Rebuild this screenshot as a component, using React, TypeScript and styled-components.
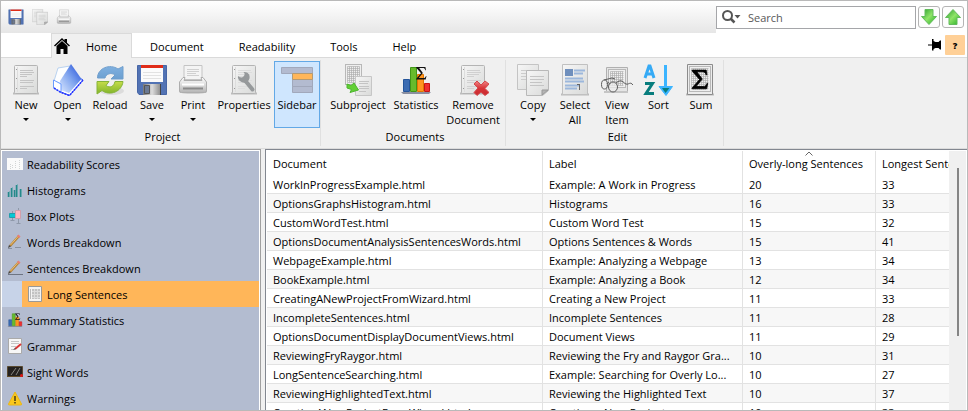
import React from "react";
import styled, { createGlobalStyle } from "styled-components";

const Global = createGlobalStyle`
  * { box-sizing: border-box; }
  body { margin: 0; }
  body, button, input, table { font-family: "Open Sans", "Noto Sans", sans-serif; font-size: 11px; line-height: 15px; color: #000; }
  button { border: 0; padding: 0; background: none; }
  svg { display: block; flex: none; }
`;

const Frame = styled.div`
  display: flex;
  flex-direction: column;
  height: 100vh;
  border: 1px solid #b9b9b9;
  background: #f0f0f0;
  overflow: hidden;
`;

/* ---------- top bar ---------- */

const TopBar = styled.header`
  display: flex;
  height: 32px;
  flex: none;
  background: #fff;
`;
const QuickTools = styled.div`
  flex: 1;
  display: flex;
  gap: 8px;
  align-items: center;
  padding-left: 7px;
  background: linear-gradient(#fff, #e6e6e6);
`;
const SearchArea = styled.div`
  display: flex;
  align-items: center;
  gap: 2px;
  padding-right: 3px;
`;
const SearchBox = styled.label`
  display: flex;
  align-items: center;
  gap: 7px;
  width: 200px;
  height: 23px;
  padding-left: 5px;
  border: 1px solid #a5a6a9;
`;
const SearchInput = styled.input`
  flex: 1;
  min-width: 0;
  border: 0;
  padding: 0;
  outline: 0;
  background: none;
  &::placeholder { color: #585858; opacity: 1; }
`;
const ArrowButton = styled.button`
  display: flex;
  align-items: center;
  justify-content: center;
  width: 22px;
  height: 22px;
  border: 1px solid #b4b4b4;
  border-radius: 3px;
  background: #fdfdfd;
`;

/* ---------- tabs ---------- */

const TabBar = styled.nav`
  display: flex;
  height: 25px;
  flex: none;
  padding-left: 50px;
  background: #fff;
  box-shadow: inset 0 -1px #dadada;
`;
const Tab = styled.button<{ $active?: boolean }>`
  display: flex;
  align-items: center;
  padding: 0 ${(p) => (p.$active ? 14 : 16)}px 0 ${(p) => (p.$active ? 2 : 17)}px;
  border: solid ${(p) => (p.$active ? "#dadada" : "transparent")};
  border-width: 1px 1px 0;
  background: ${(p) => (p.$active ? "#f0f0f0" : "transparent")};
  svg { margin-right: 16px; }
`;
const TabTools = styled.div`
  display: flex;
  align-items: center;
  gap: 4px;
  margin-left: auto;
  padding: 2px 2px 3px 0;
`;
const HelpButton = styled.button`
  width: 20px;
  height: 20px;
  border-radius: 1px;
  background: #ffd097;
  font-size: 9px;
  font-weight: 800;
`;

/* ---------- ribbon ---------- */

const Ribbon = styled.div`
  display: flex;
  flex: none;
  padding: 2px 0 2px;
  border-bottom: 1px solid #dcdcdc;
`;
const Group = styled.section<{ $lead: number }>`
  display: flex;
  flex-direction: column;
  padding-left: ${(p) => p.$lead}px;
  border-right: 1px solid #e0e0e0;
`;
const Tools = styled.div`
  display: flex;
  height: 67px;
  margin-top: 1px;
`;
const GroupName = styled.div`
  padding: 1px 0 2px;
  text-align: center;
`;
const ToolButton = styled.button<{ $width: number; $pressed?: boolean }>`
  display: flex;
  flex-direction: column;
  align-items: center;
  width: ${(p) => p.$width}px;
  padding-top: 2px;
  border: 1px solid ${(p) => (p.$pressed ? "#62a8e6" : "transparent")};
  background: ${(p) => (p.$pressed ? "#cfe6fe" : "transparent")};
`;
const ToolLabel = styled.span`
  display: block;
  margin-top: 1px;
  white-space: pre;
`;
const Caret = styled.span`
  margin-top: 6px;
  border: 3px solid transparent;
  border-top-color: #000;
  border-bottom: 0;
`;

/* ---------- body ---------- */

const Body = styled.div`
  flex: 1;
  min-height: 0;
  display: flex;
  gap: 4px;
`;
const Sidebar = styled.aside`
  flex: none;
  width: 260px;
  border: solid #a0a0a0;
  border-width: 1px 1px 0 0;
  padding: 1px 1px 0;
  background: #fff;
  overflow: hidden;
`;
const SideRow = styled.div<{ $nested?: boolean }>`
  padding-left: ${(p) => (p.$nested ? 20 : 0)}px;
  background: ${(p) => (p.$nested ? "#c7d3e8" : "#b3bcd0")};
`;
const SideItem = styled.button<{ $active?: boolean }>`
  display: flex;
  align-items: center;
  gap: 4px;
  width: 100%;
  height: 26px;
  padding-left: 5px;
  background: ${(p) => (p.$active ? "#ffb659" : "transparent")};
`;
const ListPane = styled.main`
  flex: 1;
  min-width: 0;
  display: flex;
  border: solid #828790;
  border-width: 1px 0 0 1px;
  padding: 1px 1px 0;
  background: #fff;
`;
const TableClip = styled.div`
  flex: 1;
  min-width: 0;
  overflow: hidden;
`;
const Table = styled.table`
  table-layout: fixed;
  width: 742px;
  border-collapse: separate;
  border-spacing: 0;
`;
const Head = styled.th<{ $width: number }>`
  position: relative;
  width: ${(p) => p.$width}px;
  height: 24px;
  padding: 0 0 0 6px;
  border-right: 1px solid #e2e2e2;
  font-weight: 400;
  text-align: left;
  white-space: nowrap;
  svg { position: absolute; top: 0; left: calc(50% - 4px); }
`;
const Row = styled.tr`
  &:nth-child(even) { background: #f7f7f7; }
`;
const Cell = styled.td`
  height: 19px;
  padding: 0 0 0 6px;
  border: solid #e2e2e2;
  border-width: 0 1px 1px 0;
  white-space: nowrap;
`;
const ScrollTrack = styled.div`
  width: 17px;
  flex: none;
  padding: 17px 0 0 8px;
  background: #f0f0f0;
`;
const ScrollThumb = styled.div`
  width: 2px;
  height: 168px;
  background: #858585;
`;

/* ---------- drawings ---------- */

const Svg = ({ s = 32, vb = 32, children }: { s?: number; vb?: number; children: React.ReactNode }) => (
  <svg width={s} height={s} viewBox={`0 0 ${vb} ${vb}`} aria-hidden="true">{children}</svg>
);

const HiddenSvg = styled.svg`
  position: absolute;
`;

const Defs = () => (
  <HiddenSvg width="0" height="0" aria-hidden="true">
    <defs>
      <linearGradient id="paper" x2="1" y2="1"><stop stopColor="#f6f6f6" /><stop offset="1" stopColor="#d9dad9" /></linearGradient>
      <linearGradient id="blue" x2="0" y2="1"><stop stopColor="#7fb0e0" /><stop offset="1" stopColor="#6c9fd0" /></linearGradient>
      <linearGradient id="lime" x2="0" y2="1"><stop stopColor="#c6dd4a" /><stop offset="1" stopColor="#7fb32a" /></linearGradient>
      <linearGradient id="folder" x1="0" y1="1" x2="1" y2="0"><stop stopColor="#dce8ff" /><stop offset=".5" stopColor="#7fa4ee" /><stop offset="1" stopColor="#1d49d8" /></linearGradient>
      <linearGradient id="metal" x2="0" y2="1"><stop stopColor="#fff" /><stop offset="1" stopColor="#b5b5b5" /></linearGradient>
      <linearGradient id="shutter"><stop stopColor="#777" /><stop offset=".5" stopColor="#ddd" /><stop offset="1" stopColor="#888" /></linearGradient>
      <linearGradient id="green" x2="1" y2="1"><stop stopColor="#239b2a" /><stop offset=".5" stopColor="#8fe468" /><stop offset="1" stopColor="#20ad22" /></linearGradient>
      <linearGradient id="red" x2="0" y2="1"><stop stopColor="#f08484" /><stop offset=".5" stopColor="#d83438" /><stop offset="1" stopColor="#c82b2f" /></linearGradient>
    </defs>
  </HiddenSvg>
);

const Page = () => (
  <>
    <path d="M3 29.500h26" stroke="#bcbcbc" strokeWidth="2" />
    <rect x="4.500" y="1.500" width="23" height="28" rx="1" fill="url(#paper)" stroke="#b4b4b4" />
    <path d="M7.500 3v25" stroke="#ddd" />
    <path d="M6 5.500h1M6 14.500h1M6 24.500h1" stroke="#999" />
  </>
);
const lines = "M10 6.500h13M10 8.500h14M10 10.500h12M10 12.500h7M10 16.500h14M10 18.500h13M10 22.500h14M10 24.500h7";

const NewIcon = () => <Svg><Page /><path d={lines} stroke="#c4c4c4" /></Svg>;

const OpenIcon = () => (
  <Svg>
    <path d="M2 17 6 4l12-2-8 18z" fill="#fdfeff" stroke="#b9d2f0" />
    <path d="m26 13 5 3-13.500 15.500L9 28" fill="#fff" stroke="#2b50ff" />
    <path d="m8 17 11-17 10.500 15L17 29l-8-3z" fill="url(#folder)" />
    <path d="m1.500 16 7.500 4v8.500L1.500 24z" fill="#fff" stroke="#6b9bff" />
    <path d="m2 24 7 4.500 8.500 3L31 16" fill="none" stroke="#2330ff" strokeWidth="1.500" strokeDasharray="2 1" />
  </Svg>
);

const ReloadIcon = () => (
  <Svg>
    <ellipse cx="18" cy="27" rx="12" ry="4" fill="#dcdcdc" />
    <path d="M3.500 14C3.500 4 16-.5 24 5l5-2.500V15H17l4-4c-4-3-9-1-10 3z" fill="url(#blue)" stroke="#6f9ecd" />
    <path d="M29 17.500c-1 10-13 15-21 9l-5 3.500V17.500h12l-3 4c4 3 8 1 9-4z" fill="url(#lime)" stroke="#86b438" />
  </Svg>
);

const Disk = () => (
  <>
    <path d="M1.500 1.500h29v29H3l-1.500-2z" fill="#5273b4" stroke="#4766a6" />
    <path d="M5 1h22v17H5z" fill="#fbfbfb" />
    <path d="M5 1h22v3H5z" fill="#e02c18" />
    <path d="M7 8.500h18M7 11.500h18M7 14.500h18" stroke="#e2e2e2" />
    <path d="M7 20h18v11H7z" fill="url(#shutter)" />
    <path d="M8.500 21.500h5v8h-5z" fill="#6b7a94" stroke="#555" />
    <path d="M24.500 20v11" stroke="#444" />
  </>
);

const Printer = () => (
  <>
    <ellipse cx="16" cy="28" rx="14" ry="2" fill="#d0d0d0" />
    <path d="M7 1.500h18v14H7z" fill="#f4f4f4" stroke="#c4c4c4" />
    <path d="M10 5.500h12M10 7.500h12M10 9.500h9M10 11.500h12" stroke="#d0d0d0" />
    <path d="M6 13.500 2.500 18v9q0 1.500 2 1.500h23q2 0 2-1.500v-9L26 13.500h-2l1 3H7l1-3z" fill="url(#metal)" stroke="#adadad" />
    <path d="M5 20.500h22" stroke="#fff" strokeWidth="2" />
    <path d="M6 24.500h20" stroke="#8a8a8a" strokeWidth="2" />
  </>
);

const PropertiesIcon = () => (
  <Svg>
    <Page /><path d={lines} stroke="#dcdcdc" />
    <path d="m24.500 25.500-7-8.500" stroke="#96999b" strokeWidth="4" strokeLinecap="round" />
    <path d="M10 12c1.500 1.500 4 2 5.500.5S17 9 15.500 8c4-.5 7 2.500 6 6.500s-5 5-8 3.500S9.500 14 10 12z" fill="#96999b" />
  </Svg>
);

const SidebarIcon = () => (
  <Svg>
    <path d="M.5 3.500h31v6H.500zM11.500 15.500h20v7h-20zM11.500 22.500h20v6h-20z" fill="#b3bbd0" stroke="#a1a8bb" />
    <path d="M11.500 9.500h20v6h-20z" fill="#ffb659" stroke="#b49a72" />
  </Svg>
);

const Grid = ({ x, y, w, h }: { x: number; y: number; w: number; h: number }) => (
  <>
    <rect x={x} y={y} width={w} height={h} fill="#efefef" stroke="#b8b8b8" />
    {Array.from({ length: Math.floor((w - 2) / 2) }, (_, i) => <path key={i} d={`M${x + 2 + i * 2} ${y + 2}v${h - 4}`} stroke="#c2c2c2" />)}
    {Array.from({ length: Math.floor((h - 2) / 2) }, (_, i) => <path key={i} d={`M${x + 2} ${y + 2 + i * 2}h${w - 4}`} stroke="#a8a8a8" strokeOpacity=".6" />)}
  </>
);

const SubprojectIcon = () => (
  <Svg>
    <Grid x={3.5} y={0.5} w={16} h={20} />
    <path d="M13.500 12.500h16v19h-16z" fill="url(#paper)" stroke="#c6c6c6" />
    <path d="M17 17.500h10M17 19.500h9M17 22.500h10M17 24.500h10M17 27.500h7" stroke="#c4c4c4" />
    <path d="m5 20 4 1.500 3-2.500 4.500 7-8.500 2.500 1.500-3L5 24z" fill="#62cf35" stroke="#4db62e" />
  </Svg>
);

const sigma = "M4 4h18l1 6h-1.200c-.8-2.800-2-4-5-4H10l7 9.500L9 25h9c3 0 4.200-1.500 5-4h1l-1.500 7H4v-1l9.500-11L4 5z";

const Chart = () => (
  <>
    <path d="M1 28h30l-2 2H3z" fill="#8b8fa0" />
    <path d="M3.500 15.500h6v12h-6z" fill="#3c6cb2" stroke="#24559a" />
    <path d="M10.500 3.500h6v24h-6z" fill="#67bb2c" stroke="#409617" />
    <path d="M17.500 10.500h6v17h-6z" fill="#ff951f" stroke="#e17600" />
    <path d="M24.500 19.500h5v8h-5z" fill="#ef3030" stroke="#c71414" />
    <path d={sigma} transform="translate(14 1) scale(.52)" fill="#111" />
  </>
);

const RemoveIcon = () => (
  <Svg>
    <Page /><path d={lines} stroke="#d0d0d0" />
    <path d="m17 20 3-3 4 4 4-4 4 3-4 4.500 4 4-4 3-4-3.500-4 3.500-3-3 4-4.500z" fill="url(#red)" stroke="#d5484c" />
  </Svg>
);

const CopyPages = () => (
  <>
    <path d="M.5.5h21v25H.500z" fill="url(#paper)" stroke="#c4c4c4" />
    <path d="M4 6.500h12M4 9.500h5M4 12.500h5M4 15.500h5" stroke="#ccc" />
    <path d="M9.500 6.500h22v20l-6 5h-16z" fill="url(#paper)" stroke="#b8b8b8" />
    <path d="M13 12.500h14M13 15.500h14M13 18.500h12M13 21.500h14" stroke="#c4c4c4" />
    <path d="m31 26-6 5v-5z" fill="#b4b4b4" stroke="#989898" />
  </>
);

const SelectIcon = () => (
  <Svg>
    <path d="M2 30.500h28" stroke="#bbb" strokeWidth="2" />
    <path d="M3.500.5h25v30h-25z" fill="url(#paper)" stroke="#c0c0c0" />
    <path d="M6 5h8v7H6z" fill="#6f8fbd" />
    <path d="M15 6.500h11M15 9.500h9M6 14.500h18M6 17.500h19M6 21.500h14M6 24.500h12" stroke="#9cb7dc" strokeWidth="2" />
    <path d="M18 20.500h3M20.500 20v6" stroke="#666" />
  </Svg>
);

const ViewIcon = () => (
  <Svg>
    <path d="M5.500 3.500h21v24h-21z" fill="#e5e5e5" stroke="#b0b0b0" />
    <Grid x={7.5} y={5.5} w={17} h={18} />
    <path d="M3 28h24" stroke="#c5c5c5" strokeWidth="2" />
    <g fill="#eee" fillOpacity=".7" stroke="#5d5d5d">
      <ellipse cx="3.500" cy="20.500" rx="3" ry="4.500" /><ellipse cx="12" cy="23" rx="4.500" ry="5" />
      <path d="M6 20c1-2 2-2 3 0M3 16l8-2 3 1M15 19c6-5 7 0 10 1s4-3 7 1" fill="none" />
    </g>
  </Svg>
);

const SortIcon = () => (
  <Svg>
    <path d="m2 14 4-12h1l4 12M4 10h6" fill="none" stroke="#35aaf5" strokeWidth="3" />
    <path d="M2 19.500h7.500L3 29.500h8" fill="none" stroke="#087d7d" strokeWidth="3" />
    <path d="M22.500 1v22" stroke="#3bb4ff" strokeWidth="3" />
    <path d="M16 22.500h13.500l-6.500 9z" fill="#3bb4ff" stroke="#3bb4ff" />
    <path d="M19 24h7.500l-4 5z" fill="#087d7d" />
  </Svg>
);

const SumIcon = () => (
  <Svg>
    <path d="M1 30.500h28" stroke="#bbb" strokeWidth="2" />
    <path d="M2.500.5h25v30h-25z" fill="#ececec" stroke="#8c8c8c" />
    <Grid x={4.5} y={2.5} w={21} h={25} />
    <path d={sigma} transform="translate(4 3) scale(.78)" fill="#000" stroke="#000" />
  </Svg>
);

const HomeIcon = () => (
  <Svg s={16} vb={16}>
    <path d="M8 0 0 7.500l1 1L8 2l7 6.500 1-1-3-2.800V1h-2.500v1.400zM8 3 2.500 8V16h4v-5h3v5h4V8z" />
  </Svg>
);

const SearchIcon = () => (
  <svg width="19" height="14" viewBox="0 0 19 14" aria-hidden="true">
    <circle cx="5.500" cy="5.500" r="4.500" fill="none" stroke="#555" strokeWidth="2" />
    <path d="m8.500 8.500 4 4" stroke="#555" strokeWidth="2.500" />
    <path d="M12.500 5h6l-3 3.500z" fill="#555" />
  </svg>
);

const PinIcon = () => (
  <svg width="13" height="12" viewBox="0 0 13 12" aria-hidden="true">
    <path d="M0 5.500h4V0h1.500v2l2 1h3l1.500-1.500h1v9h-1L10.500 9h-3l-2 1v1.500H4V6.500H0z" />
  </svg>
);

const ArrowIcon = ({ up }: { up?: boolean }) => (
  <Svg s={18} vb={18}>
    <path d={up ? "M9 1.500 1.500 9.500H5v7h8v-7h3.500z" : "M9 16.500 1.500 8.500H5v-7h8v7h3.500z"} fill="url(#green)" stroke="#62bb5c" />
  </Svg>
);

const Pencil = () => (
  <>
    <path d="M3 12 12 2" stroke="#b5843a" strokeWidth="2.500" />
    <path d="m3.500 11 8-9" stroke="#edc070" />
    <path d="m11 3 1.500-1.500" stroke="#e88075" strokeWidth="3" />
    <path d="m1 14 1-3 2 1.500z" fill="#4c4944" />
  </>
);

const sideIcons: Record<string, React.ReactNode> = {
  scores: <><path d="M0 2h16v12H0z" fill="#fafafa" /><path d="M3.500 8v5M5.500 9v3M8.500 5v8M12.500 4v9" stroke="#d2d5d5" strokeDasharray="1 1" /></>,
  histogram: <><path d="M2.500 15V9M5.500 15V5M10.500 15V2M14.500 15V7" stroke="#7fb3bb" /><path d="M1.500 15v-5M4.500 15V6M7.500 15V8M9.500 15V3M13.500 15V7" stroke="#25898b" strokeWidth="1.500" /></>,
  box: <>
    <path d="M5.500 3v10M11.500 0v16M3.500 12.500h4M9.500 15.500h4" stroke="#8f99aa" />
    <path d="M2.500 5.500h6v4h-6z" fill="#08c8d4" stroke="#259dab" /><path d="M8.500 2.500h5v8h-5z" fill="#ffb6c1" stroke="#d19fab" />
  </>,
  words: <><path d="M1 14.500h4M8 13.500h6" stroke="#88909f" /><Pencil /></>,
  sentences: <><path d="M1 14.500h15" stroke="#6d7482" /><Pencil /></>,
  list: <><path d="M1.500.5h13v15h-13z" fill="#f4f4f4" stroke="#999" /><path d="M5 3h8v10H5z" fill="#c2c2c2" /><path d="M3.500 3v10" stroke="#bbb" /><path d="M7.500 3v10M10.500 3v10M5 5.500h8M5 8.500h8M5 11.500h8" stroke="#ddd" /></>,
  stats: <g transform="scale(.5)"><Chart /></g>,
  grammar: <><path d="M1.500.5h13v15h-13z" fill="#f7f7f7" stroke="#aaa" /><path d="M4 3.500h8M4 5.500h8M4 8.500h5M4 11.500h4" stroke="#c5c5c5" /><path d="m8 11 6-5" stroke="#d93636" strokeWidth="2" /><path d="m6 12 2-2 1 1z" fill="#444" /></>,
  sight: <><path d="M.5 2.500h15v10H.500z" fill="#24211f" stroke="#594a31" /><path d="m4 11 5-7M9 11l4-7" stroke="#85847f" /><path d="M0 12.500h16" stroke="#604a27" /><circle cx="14.500" cy="11.500" r="1.500" fill="#e21515" /></>,
  warning: <><path d="m8 2 6.500 12q.5 1-1 1h-11q-1.500 0-1-1z" fill="#fac81c" stroke="#eab616" strokeLinejoin="round" /><path d="M8 6v5M8 12v1.500" stroke="#493b10" strokeWidth="1.500" /></>,
};

/* ---------- data ---------- */

type Tool = { label: string; width: number; icon: React.ReactNode; menu?: boolean; pressed?: boolean };
const groups: { name: string; lead: number; tools: Tool[] }[] = [
  { name: "Project", lead: 4, tools: [
    { label: "New", width: 42, icon: <NewIcon />, menu: true },
    { label: "Open", width: 41, icon: <OpenIcon />, menu: true },
    { label: "Reload", width: 44, icon: <ReloadIcon /> },
    { label: "Save", width: 40, icon: <Svg><Disk /></Svg>, menu: true },
    { label: "Print", width: 42, icon: <Svg><Printer /></Svg>, menu: true },
    { label: "Properties", width: 60, icon: <PropertiesIcon /> },
    { label: "Sidebar", width: 46, icon: <SidebarIcon />, pressed: true },
  ] },
  { name: "Documents", lead: 4, tools: [
    { label: "Subproject", width: 66, icon: <SubprojectIcon /> },
    { label: "Statistics", width: 50, icon: <Svg><Chart /></Svg> },
    { label: "Remove\nDocument", width: 64, icon: <RemoveIcon /> },
  ] },
  { name: "Edit", lead: 6, tools: [
    { label: "Copy", width: 42, icon: <Svg><CopyPages /></Svg>, menu: true },
    { label: "Select\nAll", width: 42, icon: <SelectIcon /> },
    { label: "View\nItem", width: 42, icon: <ViewIcon /> },
    { label: "Sort", width: 41, icon: <SortIcon /> },
    { label: "Sum", width: 44, icon: <SumIcon /> },
  ] },
];

const sideItems = [
  ["scores", "Readability Scores"],
  ["histogram", "Histograms"],
  ["box", "Box Plots"],
  ["words", "Words Breakdown"],
  ["sentences", "Sentences Breakdown"],
  ["list", "Long Sentences"],
  ["stats", "Summary Statistics"],
  ["grammar", "Grammar"],
  ["sight", "Sight Words"],
  ["warning", "Warnings"],
];

const rows: [string, string, number, number][] = [
  ["WorkInProgressExample.html", "Example: A Work in Progress", 20, 33],
  ["OptionsGraphsHistogram.html", "Histograms", 16, 33],
  ["CustomWordTest.html", "Custom Word Test", 15, 32],
  ["OptionsDocumentAnalysisSentencesWords.html", "Options Sentences & Words", 15, 41],
  ["WebpageExample.html", "Example: Analyzing a Webpage", 13, 34],
  ["BookExample.html", "Example: Analyzing a Book", 12, 34],
  ["CreatingANewProjectFromWizard.html", "Creating a New Project", 11, 33],
  ["IncompleteSentences.html", "Incomplete Sentences", 11, 28],
  ["OptionsDocumentDisplayDocumentViews.html", "Document Views", 11, 29],
  ["ReviewingFryRaygor.html", "Reviewing the Fry and Raygor Gra...", 10, 31],
  ["LongSentenceSearching.html", "Example: Searching for Overly Lo...", 10, 27],
  ["ReviewingHighlightedText.html", "Reviewing the Highlighted Text", 10, 37],
  ["CreatingANewProjectFromWizard.html", "Creating a New Project", 10, 33],
];

export default function App() {
  return (
    <Frame>
      <Global />
      <Defs />
      <TopBar>
        <QuickTools>
          <button aria-label="Save"><Svg s={16}><Disk /></Svg></button>
          <button aria-label="Copy"><Svg s={16}><CopyPages /></Svg></button>
          <button aria-label="Print"><Svg s={16}><Printer /></Svg></button>
        </QuickTools>
        <SearchArea>
          <SearchBox>
            <SearchIcon />
            <SearchInput placeholder="Search" aria-label="Search" />
          </SearchBox>
          <ArrowButton aria-label="Find next"><ArrowIcon /></ArrowButton>
          <ArrowButton aria-label="Find previous"><ArrowIcon up /></ArrowButton>
        </SearchArea>
      </TopBar>
      <TabBar>
        <Tab $active><HomeIcon />Home</Tab>
        <Tab>Document</Tab>
        <Tab>Readability</Tab>
        <Tab>Tools</Tab>
        <Tab>Help</Tab>
        <TabTools>
          <button aria-label="Pin ribbon"><PinIcon /></button>
          <HelpButton>?</HelpButton>
        </TabTools>
      </TabBar>
      <Ribbon>
        {groups.map((g) => (
          <Group key={g.name} $lead={g.lead}>
            <Tools>
              {g.tools.map((t) => (
                <ToolButton key={t.label} $width={t.width} $pressed={t.pressed} aria-pressed={t.pressed}>
                  {t.icon}
                  <ToolLabel>{t.label}</ToolLabel>
                  {t.menu && <Caret />}
                </ToolButton>
              ))}
            </Tools>
            <GroupName>{g.name}</GroupName>
          </Group>
        ))}
      </Ribbon>
      <Body>
        <Sidebar>
          {sideItems.map(([icon, label]) => (
            <SideRow key={label} $nested={icon === "list"}>
              <SideItem $active={icon === "list"}>
                <Svg s={16} vb={16}>{sideIcons[icon]}</Svg>
                {label}
              </SideItem>
            </SideRow>
          ))}
        </Sidebar>
        <ListPane>
          <TableClip>
            <Table>
              <thead>
                <tr>
                  <Head $width={276}>Document</Head>
                  <Head $width={200}>Label</Head>
                  <Head $width={133} aria-sort="descending">
                    Overly-long Sentences
                    <svg width="8" height="5" viewBox="0 0 8 5" aria-hidden="true"><path d="m.5 4.500 3.500-3.500 3.500 3.500" fill="none" stroke="#666" /></svg>
                  </Head>
                  <Head $width={133}>Longest Sentence</Head>
                </tr>
              </thead>
              <tbody>
                {rows.map((r, i) => (
                  <Row key={i}>
                    {r.map((value, c) => <Cell key={c}>{value}</Cell>)}
                  </Row>
                ))}
              </tbody>
            </Table>
          </TableClip>
          <ScrollTrack><ScrollThumb /></ScrollTrack>
        </ListPane>
      </Body>
    </Frame>
  );
}
